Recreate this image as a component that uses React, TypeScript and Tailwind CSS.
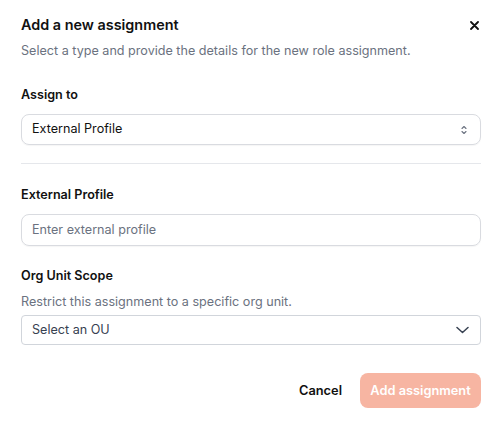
import React from "react";

export default function App() {
  return (
    <div
      className="w-[498px] h-[421px] bg-white pl-[21px] pr-[17px] pt-[13px] flex flex-col text-[#111827]"
      style={{ fontFamily: "Inter, 'Noto Sans', sans-serif" }}
    >
      <div className="flex items-center justify-between h-6">
        <h2 className="text-[14.4px] leading-6 font-semibold text-[#111]">Add a new assignment</h2>
        <button className="w-4 h-4 flex items-center justify-center text-[#111] mr-[-1px]">
          <svg width="9" height="9" viewBox="0 0 9 9" fill="none" stroke="currentColor" strokeWidth="1.8" strokeLinecap="round">
            <path d="M1 1L8 8M8 1L1 8" />
          </svg>
        </button>
      </div>
      <p className="mt-[4px] text-[12.6px] leading-5 text-[#6b7280]">
        Select a type and provide the details for the new role assignment.
      </p>

      <label className="mt-[24px] text-[12.6px] leading-5 font-semibold text-[#111]">Assign to</label>
      <div className="mt-[9px] h-[31px] rounded-lg border border-[#d9dbe0] flex items-center justify-between px-[10px] shadow-[0_1px_1px_rgba(0,0,0,0.04)]">
        <span className="text-[12.6px] text-[#111]">External Profile</span>
        <svg width="8" height="12" viewBox="0 0 8 12" fill="none" stroke="#6b7280" strokeWidth="1.1" strokeLinecap="round" strokeLinejoin="round" className="mr-[2px]">
          <path d="M2 4.5L4 2.5L6 4.5" />
          <path d="M2 7.5L4 9.5L6 7.5" />
        </svg>
      </div>

      <div className="mt-[18px] h-px bg-[#e5e7eb]" />

      <label className="mt-[21px] text-[12.6px] leading-5 font-semibold text-[#111]">External Profile</label>
      <div className="mt-[9px] h-[32px] rounded-lg border border-[#d9dbe0] flex items-center px-[10px] shadow-[0_1px_1px_rgba(0,0,0,0.04)]">
        <span className="text-[12.6px] text-[#6b7280]">Enter external profile</span>
      </div>

      <label className="mt-[20px] text-[12.6px] leading-5 font-semibold text-[#111]">Org Unit Scope</label>
      <p className="mt-[6px] text-[12.6px] leading-5 text-[#6b7280]">Restrict this assignment to a specific org unit.</p>
      <div className="mt-[3px] h-[30px] rounded-[4px] border border-[#d1d5db] flex items-center justify-between px-[10px]">
        <span className="text-[12.6px] text-[#374151]">Select an OU</span>
        <svg width="13" height="8" viewBox="0 0 13 8" fill="none" stroke="#374151" strokeWidth="1.5" strokeLinecap="round" strokeLinejoin="round" className="mr-[1px]">
          <path d="M1 1.5L6.5 6.5L12 1.5" />
        </svg>
      </div>

      <div className="mt-[28px] flex justify-end items-center gap-[2px]">
        <button className="h-[35px] px-4 text-[12.8px] font-semibold text-[#111]">Cancel</button>
        <button className="h-[35px] w-[121px] rounded-lg bg-[#f7b5a2] text-[12.8px] font-semibold text-white">
          Add assignment
        </button>
      </div>
    </div>
  );
}
